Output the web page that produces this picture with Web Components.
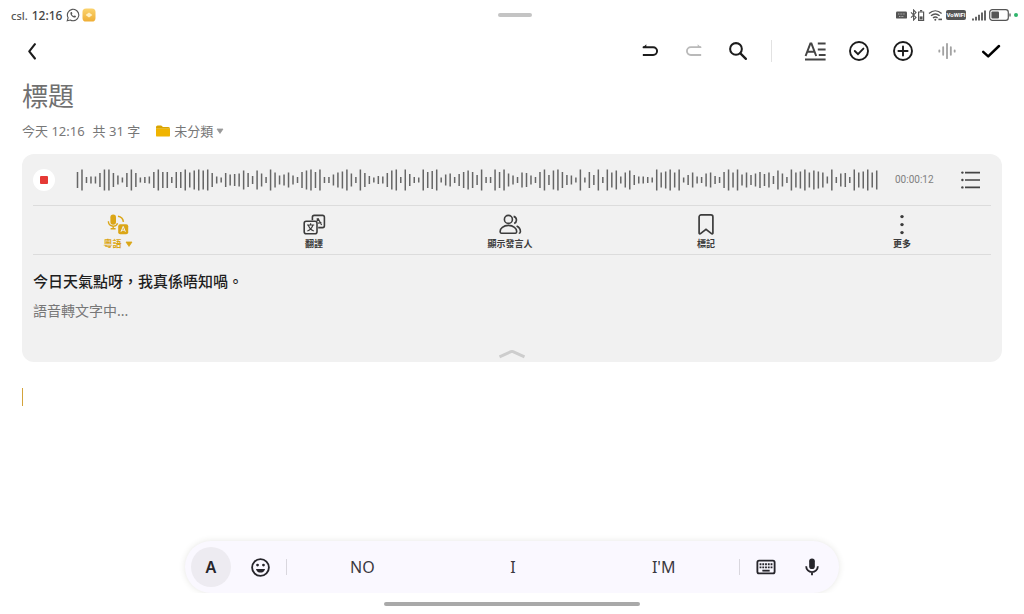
<!DOCTYPE html>
<html lang="zh-HK">
<head>
<meta charset="utf-8">
<meta name="viewport" content="width=device-width, initial-scale=1">
<title>標題</title>
<style>
  body {
    margin: 0;
    background: #fff;
    color: #222;
    font-family: "Noto Sans", "Noto Sans CJK TC", sans-serif;
    font-size: 13px;
  }
</style>
</head>
<body>
<note-app></note-app>

<script>
const ICONS = {
  back: [24, 24, '<path d="M15.2 4.6 9 12.400l6.2 7.800" fill="none" stroke="currentColor" stroke-width="2.300" stroke-linecap="round" stroke-linejoin="round"/>'],
  undo: [24, 24, '<path d="M3.400 7.400h12.400a4.700 4.700 0 0 1 0 9.400H3.400" fill="none" stroke="currentColor" stroke-width="2.300"/><path d="M2.800 8.400 7.600 3.800V8.400z" fill="currentColor"/>'],
  redo: [24, 24, '<path d="M20.600 7.400H8.200a4.700 4.700 0 0 0 0 9.400h12.400" fill="none" stroke="currentColor" stroke-width="2.200"/><path d="M21.200 8.400 16.400 3.800V8.400z" fill="currentColor"/>'],
  search: [24, 24, '<circle cx="9.800" cy="9.800" r="6.400" fill="none" stroke="currentColor" stroke-width="2.200"/><path d="m14.600 14.600 6 6" stroke="currentColor" stroke-width="2.500" stroke-linecap="round"/>'],
  style: [24, 24, '<path d="M2.600 17 7.400 4.400h1L13.2 17M4.400 12.800h7M14.800 4.400h7.800M14.800 10.400h7.800M15.800 16h6.800M2 20.600h20.600" fill="none" stroke="currentColor" stroke-width="2"/>'],
  check: [24, 24, '<circle cx="12" cy="12" r="9" fill="none" stroke="currentColor" stroke-width="1.9"/><path d="m7.8 12 3.2 3.2 5.4-5.6" fill="none" stroke="currentColor" stroke-width="1.9" stroke-linecap="round"/>'],
  plus: [24, 24, '<circle cx="12" cy="12" r="9" fill="none" stroke="currentColor" stroke-width="1.9"/><path d="M12 7.4v9.2M7.4 12h9.2" stroke="currentColor" stroke-width="1.9" stroke-linecap="round"/>'],
  voice: [24, 24, '<path d="M2.800 11.200v1.600M7.400 7.400v9.200M12 3.400v17.200M16.600 7.400v9.200M21.200 11.200v1.600" stroke="currentColor" stroke-width="2.200" stroke-linecap="round"/>'],
  done: [24, 24, '<path d="m4.2 12.8 5 4.6L20 7" fill="none" stroke="currentColor" stroke-width="2.5" stroke-linecap="round" stroke-linejoin="round"/>'],
  folder: [16, 16, '<path d="M1 4a1.6 1.6 0 0 1 1.6-1.600h3.600l1.800 1.600h5.400A1.600 1.600 0 0 1 15 5.600v.2H1z" fill="#d9a400"/><path d="M1 5.800h14v6.600a1.200 1.200 0 0 1-1.200 1.200H2.200A1.200 1.200 0 0 1 1 12.400z" fill="#f0b400"/>'],
  down: [8, 8, '<path d="M1 2h6L4 6.400z" fill="currentColor" stroke="currentColor" stroke-linejoin="round" stroke-width=".8"/>'],
  list: [20, 20, '<path d="M4 2.600h15M4 10h15M4 17.400h15" stroke="currentColor" stroke-width="1.600"/><g fill="currentColor"><circle cx="1.400" cy="2.600" r="1.200"/><circle cx="1.400" cy="10" r="1.200"/><circle cx="1.400" cy="17.400" r="1.200"/></g>'],
  dictate: [24, 24, '<rect x="4.400" y="1.400" width="5.600" height="10.400" rx="2.800" fill="currentColor"/><path d="M2.400 8.200a4.800 4.800 0 0 0 9.200 2M7.200 13.200v2.400M4.600 15.800h5" fill="none" stroke="currentColor" stroke-width="1.400"/><path d="M12 3.200c3.200.4 5 2.400 5.400 5.600" fill="none" stroke="currentColor" stroke-width="1.500"/><rect x="12.200" y="11.200" width="10" height="10" rx="2" fill="currentColor"/><path d="m15 18.800 2.200-5.400 2.200 5.400M15.900 17.200h2.600" fill="none" stroke="#f1f1f1" stroke-width="1"/>'],
  translate: [24, 24, '<path d="M10.400 7.200V4.200A1.800 1.800 0 0 1 12.200 2.400h8.400A1.800 1.800 0 0 1 22.400 4.200v8.600a1.800 1.800 0 0 1-1.800 1.800h-4.400" fill="none" stroke="currentColor" stroke-width="1.600"/><path d="m14.600 6.200 1.600-.4 3.400 6.200M16 10.200l3.400-.6M16.400 5.600l-1.600 2.600" fill="none" stroke="currentColor" stroke-width="1.200"/><rect x="2.200" y="8.200" width="12.800" height="12.600" rx="2" fill="none" stroke="currentColor" stroke-width="1.600"/><path d="M5 12h7.200M8.600 10.200V12M6.400 12.200c.6 2.600 2.800 4.800 5.400 5.800M10.800 12.200c-.6 2.600-2.800 4.800-5.400 5.800" fill="none" stroke="currentColor" stroke-width="1.200"/>'],
  people: [24, 24, '<circle cx="10.400" cy="6.400" r="4" fill="none" stroke="currentColor" stroke-width="1.600"/><path d="M2.200 19.200c-.6-4 3.600-6.800 8.200-6.800s8.800 2.800 8.200 6.800c-.1.700-.5 1-1.200 1h-14c-.7 0-1.100-.3-1.200-1zM15.600 3.400a3.700 3.700 0 0 1 .6 7M18.600 13c2.600 1.200 4 3.400 3.800 6-.1.700-.5 1.200-1.600 1.200" fill="none" stroke="currentColor" stroke-width="1.600"/>'],
  bookmark: [24, 24, '<path d="M5.100 20V3.900A2 2 0 0 1 7.100 1.900h9.800a2 2 0 0 1 2 2v16c0 .8-.8 1.200-1.400.7L12 16.300l-5.500 4.300c-.6.500-1.400.1-1.400-.6z" fill="none" stroke="currentColor" stroke-width="1.700"/>'],
  more: [24, 24, '<g fill="currentColor"><circle cx="12" cy="3.600" r="1.700"/><circle cx="12" cy="11.600" r="1.700"/><circle cx="12" cy="19.600" r="1.700"/></g>'],
  collapse: [28, 10, '<path d="M1.500 7.800 13 2.600q1-.4 2 0L26.500 7.800" fill="none" stroke="#cdcdcd" stroke-width="3"/>'],
  smile: [24, 24, '<circle cx="12" cy="12" r="9.600" fill="none" stroke="currentColor" stroke-width="2.100"/><circle cx="8.600" cy="9.200" r="1.600" fill="currentColor"/><circle cx="15.400" cy="9.200" r="1.600" fill="currentColor"/><path d="M6.800 13.600h10.400c-.6 2.600-2.600 4.200-5.200 4.200s-4.600-1.600-5.200-4.200z" fill="currentColor"/>'],
  keyboard: [24, 24, '<rect x="2.600" y="5" width="18.800" height="14" rx="1.800" fill="none" stroke="currentColor" stroke-width="2"/><path d="M5 9h14M5 12.400h14" stroke="currentColor" stroke-width="2.100" stroke-dasharray="2 1"/><path d="M8 16h8" stroke="currentColor" stroke-width="2"/>'],
  mic: [24, 24, '<rect x="8.600" y="1.800" width="6.800" height="12.600" rx="3.400" fill="currentColor"/><path d="M5 11.200a7 7 0 0 0 14 0M12 18v4" fill="none" stroke="currentColor" stroke-width="2.200"/>'],
  whatsapp: [14, 14, '<path d="m1.200 12.800.9-3A5.700 5.700 0 1 1 4.300 12z" fill="none" stroke="currentColor" stroke-width="1.100"/><path d="M4.700 4.300c.5-.6 1-.5 1.200 0l.4 1c.1.300-.4.700-.5.900.4.900 1.100 1.500 2 1.900.3-.2.600-.8.900-.6l1.100.5c.4.300 0 1.200-.6 1.500C7 10.300 3.400 6.500 4.700 4.300z" fill="currentColor"/>'],
  app: [14, 14, '<defs><linearGradient id="g" x2="0" y2="1"><stop stop-color="#fbd36d"/><stop offset="1" stop-color="#efae35"/></linearGradient></defs><rect x=".5" y=".5" width="13" height="13" rx="3.600" fill="url(#g)"/><path d="M3.600 7 7 4.600 10.400 7 7 9.400z" fill="#fff0c2"/>'],
  statuskeys: [11, 12, '<rect y="2.600" width="11" height="7" rx="1.200" fill="currentColor"/><path d="M2 5h7M3 7.500h5" stroke="#bbb" stroke-width=".9" stroke-dasharray="1 .6"/>'],
  bluetooth: [15, 12, '<path d="m1 3.400 5 5L3.600 11V1L6 3.600l-5 5" fill="none" stroke="currentColor" stroke-width="1.100"/><path d="M8.600 3h5v8.400h-5zM10 1.600h2.200" fill="none" stroke="currentColor" stroke-width="1.200"/><path d="M9.600 7.400h3v3h-3z" fill="currentColor"/>'],
  wifi: [15, 12, '<path d="M1 4.400c3.800-3.400 8.800-3.400 12.600 0M3 6.800c2.600-2.200 6-2.200 8.600 0M5 9c1.400-1.200 3.200-1.200 4.600 0" fill="none" stroke="currentColor" stroke-width="1.400"/><circle cx="7.300" cy="10.800" r="1" fill="currentColor"/><path d="M10.400 10.400h3.600" stroke="currentColor" stroke-width="1.600"/>'],
  signal: [14, 12, '<path d="M1 9.400V11.400M4 7.800v3.600M7 5.800v5.600M10 3.600v7.800M13 1.400v10" stroke="currentColor" stroke-width="1.800"/>'],
  battery: [22, 12, '<rect x=".7" y=".7" width="18.600" height="10.600" rx="2.600" fill="none" stroke="currentColor" stroke-width="1.200"/><rect x="2.400" y="2.600" width="7.600" height="6.800" rx="1" fill="currentColor"/><path d="M21 4.500v3" stroke="currentColor" stroke-width="1.300"/>'],
};

function define(name, html, setup) {
  const template = document.createElement('template');
  template.innerHTML = html;
  customElements.define(name, class extends HTMLElement {
    connectedCallback() {
      if (this.shadowRoot) return;
      this.attachShadow({ mode: 'open' }).append(template.content.cloneNode(true));
      if (setup) setup(this, this.shadowRoot);
    }
  });
}

define('app-icon', '<style>:host{display:inline-flex;flex:none}svg{display:block}</style>', (host, root) => {
  const [w, h, body] = ICONS[host.getAttribute('name')];
  const width = Number(host.getAttribute('size')) || w;
  root.innerHTML += `<svg aria-hidden="true" width="${width}" height="${Math.round(width * h / w)}" viewBox="0 0 ${w} ${h}">${body}</svg>`;
});

define('icon-button', `
  <style>
    :host { display: block; width: 44px; flex: none; }
    button { display: flex; align-items: center; justify-content: center; width: 100%; height: 40px;
      margin: 0; padding: 0; border: 0; background: none; color: inherit; font: inherit; cursor: pointer; }
  </style>
  <button type="button"><slot></slot></button>`, (host, root) => {
  root.querySelector('button').setAttribute('aria-label', host.getAttribute('label'));
});

define('status-bar', `
  <style>
    :host { display: grid; grid-template-columns: 1fr auto 1fr; align-items: center; height: 30px;
      padding: 0 6px 0 11px; color: #555; font-size: 12px; }
    .side { display: flex; align-items: center; gap: 4px; }
    .carrier { font-size: 11px; font-weight: 500; }
    time { font-weight: 500; color: #444; }
    .apps { display: flex; gap: 2px; }
    .pill { width: 34px; height: 4px; border-radius: 2px; background: #c4c4c4; }
    .right { justify-content: flex-end; gap: 3px; }
    .badge { width: 20px; border-radius: 2px; background: #555; color: #fff; text-align: center;
      font: 700 6px/10px Roboto, sans-serif; }
    .signal { margin-left: 3px; }
    .dot { width: 4px; height: 4px; border-radius: 50%; background: #2fb56c; }
  </style>
  <div class="side"><span class="carrier">csl.</span><time>12:16</time>
    <span class="apps"><app-icon name="whatsapp" size="14"></app-icon><app-icon name="app" size="14"></app-icon></span></div>
  <div class="pill"></div>
  <div class="side right">
    <app-icon name="statuskeys"></app-icon><app-icon name="bluetooth"></app-icon><app-icon name="wifi"></app-icon>
    <span class="badge">VoWiFi</span><app-icon class="signal" name="signal"></app-icon>
    <app-icon name="battery"></app-icon><span class="dot"></span>
  </div>`);

define('note-toolbar', `
  <style>
    :host { display: flex; align-items: center; height: 42px; padding: 0 11px 0 10px; color: #1c1c1c; }
    .space { flex: 1; }
    .rule { width: 1px; height: 22px; margin: 0 21px 0 11px; background: #e2e2e2; }
    .off { color: #b9b9b9; } .soft { color: #a2a2a2; } .dark { color: #000; } .text { color: #444; }
  </style>
  <icon-button label="返回"><app-icon name="back" size="22"></app-icon></icon-button>
  <span class="space"></span>
  <icon-button label="復原"><app-icon name="undo" size="20"></app-icon></icon-button>
  <icon-button class="off" label="重做"><app-icon name="redo" size="20"></app-icon></icon-button>
  <icon-button label="搜尋"><app-icon name="search" size="22"></app-icon></icon-button>
  <span class="rule"></span>
  <icon-button class="text" label="文字樣式"><app-icon name="style" size="24"></app-icon></icon-button>
  <icon-button label="待辦"><app-icon name="check" size="24"></app-icon></icon-button>
  <icon-button label="新增"><app-icon name="plus" size="24"></app-icon></icon-button>
  <icon-button class="soft" label="錄音"><app-icon name="voice" size="20"></app-icon></icon-button>
  <icon-button class="dark" label="完成"><app-icon name="done" size="24"></app-icon></icon-button>`);

define('note-header', `
  <style>
    :host { display: block; padding: 0 22px; }
    input { display: block; box-sizing: border-box; width: 100%; height: 48px; margin: 0; padding: 0; border: 0; outline: 0;
      background: none; color: #222; font: 26px/48px "Noto Sans", "Noto Sans CJK TC", sans-serif; }
    input::placeholder { color: #707070; opacity: 1; }
    .meta { display: flex; align-items: center; height: 22px; color: #777; line-height: 22px; }
    .count { margin-left: 8px; }
    button { display: flex; align-items: center; gap: 3px; margin: 0 0 0 15px; padding: 0; border: 0;
      background: none; color: inherit; font: inherit; cursor: pointer; }
    .arrow { color: #999; }
  </style>
  <input type="text" aria-label="標題" placeholder="標題">
  <div class="meta"><span>今天 12:16</span><span class="count">共 31 字</span>
    <button type="button"><app-icon name="folder"></app-icon><span>未分類</span><app-icon class="arrow" name="down"></app-icon></button></div>`);

const LEVELS = [
  15,20,5,6,6,13,20,20,13,8,4,13,20,13,4,5,6,15,20,15,15,5,15,15,20,14,18,20,18,20,13,6,4,13,10,11,12,18,13,7,18,12,5,20,14,8,10,14,8,5,
  15,18,20,15,20,5,5,10,14,16,20,12,5,20,13,7,4,7,6,13,18,20,5,20,11,5,4,20,15,17,20,4,10,12,5,11,15,18,15,9,20,5,5,20,15,20,12,8,5,14,13,8,5,15,20,9,18,20,15,9,8,4,20,4,15,9,20,
  5,20,14,18,6,14,18,9,6,6,5,4,20,14,16,20,14,20,4,9,14,6,5,12,14,7,5,15,20,14,20,10,14,9,12,15,11,14,7,18,12,5,20,14,16,20,14,18,16,14,6,20,5,12,13,5,20,14,16,20,14,18,
];

define('wave-form', '<style>:host{display:block;height:24px;min-width:0}svg{display:block;width:100%;height:100%}</style>', (host, root) => {
  const step = 4.49;
  const bars = LEVELS.map((h, i) => `M${(1.5 + i * step).toFixed(2)} ${12 - h / 2 - 0.5}v${h + 1}`).join('');
  root.innerHTML += `<svg role="img" aria-label="錄音波形" viewBox="0 0 803 24" preserveAspectRatio="none"><path d="${bars}" stroke="#666" stroke-width="1.5"/></svg>`;
});

define('tool-item', `
  <style>
    :host { display: block; flex: 1; color: #3c3c3c; }
    button { display: flex; flex-direction: column; align-items: center; width: 100%; height: 48px; margin: 0;
      padding: 7px 0 0; border: 0; background: none; color: inherit; font: inherit; cursor: pointer; }
    .label { display: flex; align-items: center; gap: 3px; font-size: 9px; font-weight: 700; line-height: 14px; }
  </style>
  <button type="button"><slot name="icon"></slot><span class="label"><slot></slot></span></button>`);

define('recorder-card', `
  <style>
    :host { display: block; margin: 12px 22px 0; border-radius: 12px; background: #f1f1f1; }
    .row { display: flex; align-items: center; height: 51px; padding: 0 11px; }
    .stop { display: flex; align-items: center; justify-content: center; flex: none; width: 22px; height: 22px;
      margin: 0 21px 0 0; padding: 0; border: 0; border-radius: 50%; background: #fff; cursor: pointer; }
    .stop::before { content: ""; width: 8px; height: 8px; border-radius: 1px; background: #e53935; }
    wave-form { flex: 1; }
    time { width: 40px; margin: 0 16px; color: #808080; font: 10px/16px Roboto, sans-serif; }
    .list { width: 40px; color: #444; }
    .tools { display: flex; margin-right: 2px; margin-left: -2px; }
    hr { height: 1px; margin: 0 11px; border: 0; background: #dcdcdc; }
    .on { color: #dba617; }
    .text { padding: 11px 11px 0; line-height: 30px; }
    p { margin: 0; }
    .said { color: #1e1e1e; font-size: 15px; font-weight: 500; }
    .busy { color: #777; font-size: 14px; }
    .fold { display: flex; align-items: flex-end; justify-content: center; width: 100%; height: 36px; margin: 0;
      padding: 0 0 3px; border: 0; background: none; cursor: pointer; }
  </style>
  <div class="row">
    <button class="stop" type="button" aria-label="停止錄音"></button>
    <wave-form></wave-form>
    <time>00:00:12</time>
    <icon-button class="list" label="清單"><app-icon name="list"></app-icon></icon-button>
  </div>
  <hr>
  <div class="tools">
    <tool-item class="on"><app-icon slot="icon" name="dictate"></app-icon>粵語<app-icon name="down"></app-icon></tool-item>
    <tool-item><app-icon slot="icon" name="translate"></app-icon>翻譯</tool-item>
    <tool-item><app-icon slot="icon" name="people"></app-icon>顯示發言人</tool-item>
    <tool-item><app-icon slot="icon" name="bookmark"></app-icon>標記</tool-item>
    <tool-item><app-icon slot="icon" name="more"></app-icon>更多</tool-item>
  </div>
  <hr>
  <div class="text"><p class="said">今日天氣點呀，我真係唔知喎。</p><p class="busy">語音轉文字中...</p></div>
  <button class="fold" type="button" aria-label="收起"><app-icon name="collapse"></app-icon></button>`);

define('note-body', `
  <style>
    :host { display: flex; flex: 1; padding: 26px 22px 0; }
    .caret { width: 1px; height: 18px; background: #d3a33b; }
    textarea { flex: 1; min-height: 24px; margin: 0; padding: 0; border: 0; outline: 0; resize: none;
      background: none; font: 15px/20px "Noto Sans", "Noto Sans CJK TC", sans-serif; }
  </style>
  <span class="caret"></span><textarea aria-label="筆記內容"></textarea>`);

define('suggestion-strip', `
  <style>
    :host { display: block; padding: 8px 10px; }
    .clip { box-sizing: border-box; max-width: 674px; margin: 0 auto; padding: 8px 10px 0; overflow: hidden; }
    .bar { display: flex; align-items: center; height: 52px; padding: 0 4px 0 6px; border-radius: 26px;
      background: #faf8ff; box-shadow: 0 0 6px rgba(60, 60, 40, .13); color: #26252b; }
    button { margin: 0; padding: 0; border: 0; background: none; color: inherit; font: inherit; cursor: pointer; }
    .shift { width: 40px; height: 40px; margin-right: 6px; border-radius: 50%; background: #edebf1; font-size: 16px; font-weight: 600; }
    icon-button { width: 46px; }
    .words { display: grid; grid-template-columns: repeat(3, 1fr); flex: 1; margin: 0 3px; border: solid #d9d7de; border-width: 0 1px; }
    .words button { height: 16px; font-size: 16px; line-height: 16px; color: #3a393f; }
    .home { width: 256px; height: 4px; margin: 9px auto 0; border-radius: 2px; background: #a9a9a9; }
  </style>
  <div class="clip"><div class="bar">
    <button class="shift" type="button">A</button>
    <icon-button label="表情符號"><app-icon name="smile" size="21"></app-icon></icon-button>
    <div class="words"><button type="button">NO</button><button type="button">I</button><button type="button">I'M</button></div>
    <icon-button label="鍵盤"><app-icon name="keyboard" size="22"></app-icon></icon-button>
    <icon-button label="語音輸入"><app-icon name="mic" size="20"></app-icon></icon-button>
  </div></div>
  <div class="home"></div>`);

define('note-app', `
  <style>:host { display: flex; flex-direction: column; min-height: 100vh; }</style>
  <status-bar></status-bar>
  <note-toolbar></note-toolbar>
  <note-header></note-header>
  <recorder-card></recorder-card>
  <note-body></note-body>
  <suggestion-strip></suggestion-strip>`);
</script>
</body>
</html>
